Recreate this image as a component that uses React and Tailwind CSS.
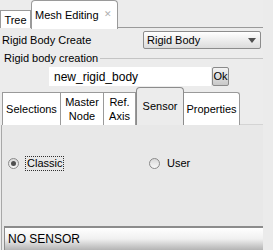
import React from 'react';

const font = { fontFamily: '"Liberation Sans", Arial, sans-serif' };

function Radio({ checked }) {
  return (
    <span className="w-[11px] h-[11px] rounded-full border border-[#8a8a8a] bg-gradient-to-b from-[#d8d8d8] to-[#f8f8f8] flex items-center justify-center">
      {checked && <span className="w-[5px] h-[5px] rounded-full bg-[#505050]" />}
    </span>
  );
}

export default function App() {
  return (
    <div className="w-[273px] h-[250px] bg-[#ebebeb] overflow-hidden flex text-[11px] text-black" style={font}>
      <div className="w-[263px] flex flex-col bg-[#ececec]">
        {/* top tabs */}
        <div className="h-[29px] flex items-end">
          <div className="w-[31px] h-[18px] bg-white border border-[#9a9a9a] border-b-0 flex items-center justify-center pt-[1px]">
            Tree
          </div>
          <div className="w-[87px] bg-white border border-[#9a9a9a] border-b-0 rounded-t-[4px] flex items-center pl-[3px] gap-[5px] -mb-[1px] h-[29px]">
            <span>Mesh Editing</span>
            <span className="text-[#b0b0b0] text-[9px]">✕</span>
          </div>
          <div className="flex-1 border-b border-[#9a9a9a]" />
        </div>

        {/* rigid body create row */}
        <div className="h-[19px] mt-[3px] flex items-center pl-[2px]">
          <span className="w-[141px]">Rigid Body Create</span>
          <div className="w-[118px] h-[18px] border border-[#8c8c8c] rounded-[2px] bg-gradient-to-b from-white to-[#dcdcdc] flex items-center justify-between pl-[3px] pr-[4px]">
            <span>Rigid Body</span>
            <svg width="8" height="5" viewBox="0 0 8 5">
              <path d="M0 0h8L4 5z" fill="#505050" />
            </svg>
          </div>
        </div>

        {/* group label */}
        <div className="flex items-center mt-[2px] h-[14px] pl-[4px]">
          <span>Rigid body creation</span>
          <div className="flex-1 ml-[2px] border-t border-[#c4c4c4]" />
        </div>

        {/* name input */}
        <div className="flex mt-[2px] ml-[49px] h-[20px]">
          <div className="w-[162px] bg-white flex items-center pl-[5px] text-[12px]">new_rigid_body</div>
          <div className="w-[17px] ml-[1px] border border-[#8a8a8a] rounded-[2px] bg-gradient-to-b from-[#f4f4f4] to-[#c8c8c8] flex items-center justify-center">
            Ok
          </div>
        </div>

        {/* inner tabs */}
        <div className="mt-[1px] flex items-end pl-[2px] h-[38px]">
          <div className="w-[59px] h-[33px] bg-white border border-[#9a9a9a] border-b-0 flex items-center justify-center">Selections</div>
          <div className="w-[43px] h-[33px] bg-white border border-[#9a9a9a] border-b-0 border-l-0 flex flex-col items-center justify-center leading-[14px]">
            <span>Master</span>
            <span>Node</span>
          </div>
          <div className="w-[32px] h-[33px] bg-white border border-[#9a9a9a] border-b-0 border-l-0 flex flex-col items-center justify-center leading-[14px]">
            <span>Ref.</span>
            <span>Axis</span>
          </div>
          <div className="w-[48px] h-[38px] bg-[#ececec] border border-[#8c8c8c] border-b-0 rounded-t-[4px] flex items-center justify-center">Sensor</div>
          <div className="w-[56px] h-[33px] bg-white border border-[#9a9a9a] border-b-0 border-l-0 rounded-tr-[3px] flex items-center justify-center">Properties</div>
          <div className="flex-1 border-b border-[#d4d4d4]" />
        </div>

        {/* content */}
        <div className="flex-1 bg-[#e8e8e8] border-l border-[#a8a8a8] ml-[1px] flex flex-col">
          <div className="h-[38px] mt-[19px] flex items-center">
            <div className="w-[143px] flex items-center pl-[6px] gap-[6px]">
              <Radio checked />
              <span className="border border-dotted border-[#303030] px-[1px] leading-[13px]">Classic</span>
            </div>
            <div className="flex items-center gap-[7px] ml-[4px]">
              <Radio />
              <span>User</span>
            </div>
          </div>
          <div className="mt-[44px] ml-[2px] h-[24px] shrink-0 border-t-2 border-l border-[#8c8c8c] bg-gradient-to-b from-white via-[#f0f0f0] to-[#b4b4b4] flex items-center pl-[3px] text-[12px]">
            NO SENSOR
          </div>
        </div>
      </div>
      <div className="flex-1 bg-[#ebebeb]" />
    </div>
  );
}
